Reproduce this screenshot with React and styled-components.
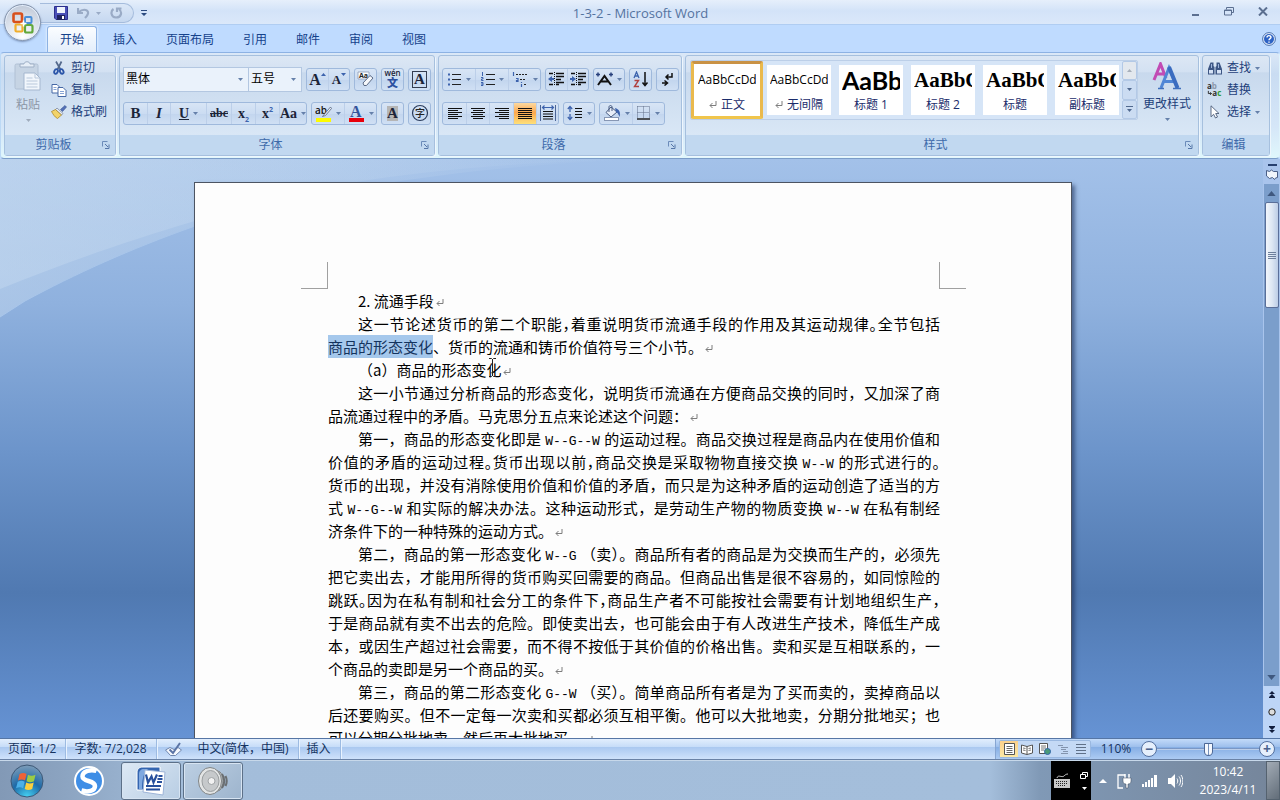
import React, { useState } from "react";
import styled, { createGlobalStyle, css } from "styled-components";

const GlobalStyle = createGlobalStyle`
  * {
    box-sizing: border-box;
  }
  body {
    margin: 0;
    font-family: "Open Sans", "Noto Sans CJK SC", sans-serif;
    font-size: 12px;
    line-height: 16px;
    color: #1e3f7a;
  }
  button, select, input {
    margin: 0;
    padding: 0;
    border: 0;
    background: none;
    color: inherit;
    font: inherit;
  }
  svg {
    display: block;
    flex: none;
  }
`;

const INK = "#2b3c5c";
const BLUE = "#3d63ad";

/* ---------- small drawings ---------- */

const Arrow = ({ up, color = "#6580aa", size = 5 }) => (
  <svg width={size} height={(size + 1) / 2} viewBox="0 0 5 3">
    <path d={up ? "M0 3h5L2.500 0z" : "M0 0h5L2.500 3z"} fill={color} />
  </svg>
);

const Lines = ({ rows, width = 16, height = 13, color = "#111" }) => (
  <svg width={width} height={height} viewBox={`0 0 ${width} ${height}`}>
    {rows.map(([x, y, w]) => (
      <rect key={y + "-" + x} x={x} y={y} width={w} height="1" fill={color} />
    ))}
  </svg>
);

const OfficeLogo = () => (
  <svg width="24" height="24" viewBox="0 0 24 24" fill="none" strokeWidth="2.600">
    <rect x="2.500" y="2.500" width="8.500" height="8.500" rx="1.500" stroke="#d8501c" />
    <rect x="14" y="6" width="6.500" height="6" rx="1" stroke="#4a8fd8" strokeWidth="2" />
    <rect x="4.500" y="13.500" width="7" height="7" rx="1" stroke="#f0ae2c" strokeWidth="2.200" />
    <rect x="14" y="14" width="7.500" height="7.500" rx="1.500" stroke="#62a83c" strokeWidth="2.200" />
    <path d="M12.500 9.500v6M9.500 12.500h6" stroke="#fff" strokeWidth="1.500" />
  </svg>
);

const SaveIcon = () => (
  <svg width="14" height="14" viewBox="0 0 14 14">
    <path d="M.5.500h13v13H2l-1.500-1.500z" fill="#4a50b8" stroke="#2c2f8c" />
    <rect x="3" y="1" width="8" height="6" fill="#eef3fc" />
    <rect x="3" y="9" width="8" height="5" fill="#1f2360" />
    <rect x="8" y="10" width="2" height="3" fill="#fff" />
  </svg>
);

const UndoIcon = () => (
  <svg width="13" height="12" viewBox="0 0 13 12" fill="none" stroke="#9aabc6" strokeWidth="2.200">
    <path d="M2 5c3-3 8-3 9 0 .6 2.500-1 4-3 6" />
    <path d="M1 1v5h5" />
  </svg>
);

const RedoIcon = () => (
  <svg width="13" height="12" viewBox="0 0 13 12" fill="none" stroke="#9aabc6" strokeWidth="2.200">
    <path d="M3.500 2C.5 4 .5 10 6 10.500c5.500 0 6.500-5.500 3-8.500" />
    <path d="M7 5V1.500h4.500" />
  </svg>
);

const HelpIcon = () => (
  <svg width="14" height="14" viewBox="0 0 14 14">
    <circle cx="7" cy="7" r="6.400" fill="#e9f1fb" stroke="#4b70ad" />
    <circle cx="7" cy="7" r="5" fill="#2d62c4" />
    <path d="M5 5.500c0-2.400 4-2.400 4-.2C9 6.700 7 6.600 7 8.200M7 9.400v1.300" fill="none" stroke="#fff" strokeWidth="1.400" />
  </svg>
);

const PasteIcon = () => (
  <svg width="28" height="30" viewBox="0 0 28 30">
    <rect x="1" y="3" width="23" height="25" rx="1.500" fill="#c6d4e4" stroke="#b0c0d4" />
    <path d="M6 6h14V3h-4c0-3-6-3-6 0H6z" fill="#e6eef7" stroke="#9fb0c6" />
    <path d="M10 12h11l5 5v12H10z" fill="#f1f6fc" stroke="#a5b7cf" />
    <path d="M21 12v5h5M12.500 17h6M12.500 20h11M12.500 23h11M12.500 26h11" fill="none" stroke="#b9c8db" />
  </svg>
);

const CutIcon = () => (
  <svg width="14" height="14" viewBox="0 0 14 14" fill="none">
    <path d="M4 .5l4.500 8M9.500.5L5.500 8.500" stroke="#54698c" strokeWidth="1.700" />
    <ellipse cx="4" cy="10.500" rx="1.700" ry="2.400" stroke="#2b55a8" strokeWidth="1.900" transform="rotate(25 4 10.500)" />
    <ellipse cx="9.700" cy="10.500" rx="1.700" ry="2.400" stroke="#2b55a8" strokeWidth="1.900" transform="rotate(-25 9.700 10.500)" />
  </svg>
);

const CopyIcon = () => (
  <svg width="15" height="13" viewBox="0 0 15 13" fill="#fff" stroke="#4668a5">
    <path d="M.5.500h5l2.500 2.500v6H.5z" />
    <path d="M6.500 3.500h5l3 3v6h-8z" />
    <path d="M2 3.500h3M2 5.500h3M8.500 7.500h4M8.500 9.500h4" stroke="#86a3d4" />
  </svg>
);

const BrushIcon = () => (
  <svg width="16" height="14" viewBox="0 0 16 14">
    <path d="M9.500 4.500L14 .5l1.500 1.500-4 4.500z" fill="#5470b8" stroke="#34508f" strokeWidth=".6" />
    <path d="M6 3l6 5.500-1.500 1.500L4.500 4.500z" fill="#e9edf5" stroke="#6d7a94" strokeWidth=".7" />
    <path d="M4.500 4.500l6 5.500-4 3.500C3.500 12 2 9 .5 6.500z" fill="#f2d36a" stroke="#a37f20" strokeWidth=".7" />
  </svg>
);

const EraserIcon = () => (
  <svg width="17" height="16" viewBox="0 0 17 16">
    <path d="M1 1h11v7H1z" fill="#fff" stroke="#8b9ab4" strokeWidth=".8" />
    <text x="2" y="7" fontSize="7" fontWeight="700" fill="#222">Aa</text>
    <path d="M6 12l7-7.500 3 2.500-6.500 7.500H7z" fill="#f6f8fb" stroke="#5c6b86" />
  </svg>
);

const HighlightIcon = () => (
  <svg width="17" height="17" viewBox="0 0 17 17">
    <text x="0" y="9" fontSize="10" fontWeight="600" fill="#111">ab</text>
    <path d="M15.500 2l-6 7-2 2.500 3-1 6-7z" fill="#e8edf5" stroke="#56657f" strokeWidth=".8" />
    <rect x="1" y="13" width="15" height="4" fill="#fdfb00" />
  </svg>
);

const FontColorIcon = () => (
  <svg width="17" height="17" viewBox="0 0 17 17">
    <text x="2" y="12" fontSize="16" fontWeight="700" fontFamily="Liberation Serif" fill="#34549a">A</text>
    <rect x="1" y="13" width="15" height="4" fill="#e8000b" />
  </svg>
);

const CircledIcon = () => (
  <svg width="18" height="18" viewBox="0 0 18 18">
    <circle cx="9" cy="9" r="7.500" fill="none" stroke={INK} strokeWidth="1.200" />
    <text x="4" y="13" fontSize="10" fontWeight="500" fill="#222">字</text>
  </svg>
);

const BulletsIcon = () => (
  <svg width="15" height="14" viewBox="0 0 15 14">
    <path d="M1 2.500h2M1 7.500h2M1 12.500h2" stroke={BLUE} strokeWidth="2" />
    <path d="M5 2.500h9M5 7.500h9M5 12.500h9" stroke="#222" />
  </svg>
);

const NumbersIcon = () => (
  <svg width="15" height="14" viewBox="0 0 15 14">
    <path d="M2.500 0v4M1 5.500h2v1.500H1.500v1.500h2M1 10.500h2v3H1M1 12h2" fill="none" stroke={BLUE} />
    <path d="M6 2.500h9M6 7.500h9M6 12.500h9" stroke="#222" />
  </svg>
);

const OutlineIcon = () => (
  <svg width="17" height="15" viewBox="0 0 17 15">
    <path d="M1.500 0v4M4 6.500h2v3H4.500V8.500H6M9.500 10v1M9.500 12v3" fill="none" stroke={BLUE} strokeWidth="1.200" />
    <path d="M4 2.500h2M7 2.500h2M10 2.500h2M13 2.500h2M8 7.500h2M11 7.500h2M12 12.500h2" stroke="#222" />
  </svg>
);

const IndentIcon = ({ out }) => (
  <svg width="17" height="14" viewBox="0 0 17 14">
    <path d="M1 1.500h4M8 1.500h8M8 4.500h8M8 7.500h5M8 10.500h8M1 12.500h4M8 12.500h3" stroke="#111" strokeWidth="1.400" />
    <path d="M6.500 0v14" stroke="#111" strokeDasharray="1 1" />
    <path d={out ? "M0 7l4-3v2h2v2H4v2z" : "M6 7L2 4v2H0v2h2v2z"} fill={BLUE} />
  </svg>
);

const WideTextIcon = () => (
  <svg width="17" height="14" viewBox="0 0 17 14" fill="none">
    <path d="M2 13l6.500-9L15 13M5 9.500h7" stroke="#111" strokeWidth="2" />
    <path d="M0 2.500h4M2 .5v4M17 2.500h-4M15 .5v4" stroke="#28407c" strokeWidth="1.500" />
  </svg>
);

const SortIcon = () => (
  <svg width="16" height="17" viewBox="0 0 16 17">
    <path d="M1 7l2.500-6L6 7M2 5h3" fill="none" stroke={BLUE} strokeWidth="1.300" />
    <path d="M1.500 9.500h4l-4 6h4.500" fill="none" stroke="#b04040" strokeWidth="1.400" />
    <path d="M12 1v13M9.500 11.500l2.500 3 2.500-3" fill="none" stroke="#111" strokeWidth="1.500" />
  </svg>
);

const MarksIcon = () => (
  <svg width="12" height="14" viewBox="0 0 12 14" fill="none" stroke="#111" strokeWidth="1.500">
    <path d="M10 1v4H4M6.500 2.500L4 5l2.500 2.500M0 11h5M2.500 8.500L5.500 11l-3 2.500" />
  </svg>
);

const DistributeIcon = () => (
  <svg width="16" height="16" viewBox="0 0 16 16" fill="none">
    <path d="M.5 0v16M15.500 0v16" stroke="#4c6596" />
    <path d="M2 2.500h12M4.500.5l-2 2 2 2M11.500.5l2 2-2 2" stroke={BLUE} strokeWidth="1.200" />
    <path d="M3 6.500h10M3 9h10M3 11.500h10M3 14h10" stroke="#111" strokeWidth="1.200" />
  </svg>
);

const SpacingIcon = () => (
  <svg width="16" height="16" viewBox="0 0 16 16" fill="none">
    <path d="M3 2v5M.8 4L3 1.500 5.200 4M3 9v5M.8 12L3 14.500 5.200 12" stroke={BLUE} strokeWidth="1.300" />
    <path d="M8 3.500h7M8 6.500h7M8 9.500h7M8 12.500h7" stroke="#111" strokeWidth="1.200" />
  </svg>
);

const BucketIcon = () => (
  <svg width="18" height="16" viewBox="0 0 18 16">
    <path d="M8 2l6 5-6 5-5-4.500z" fill="#e8eef8" stroke="#485b80" />
    <path d="M6 7V2c0-2 3-2 3 0v4" fill="none" stroke="#485b80" />
    <path d="M12 3c4 1 6 4 4.500 9-1-2.500-1.500-4-3.500-5z" fill={BLUE} />
    <rect x="1.500" y="12.500" width="14" height="3" fill="#fff" stroke="#8797b4" />
  </svg>
);

const BorderIcon = () => (
  <svg width="14" height="14" viewBox="0 0 14 14" fill="none">
    <path d="M.5.500h12v11M.5.500v12M6.500.500v12M.5 6.500h12" stroke="#5e6c88" strokeDasharray="1 1" />
    <path d="M0 13h13" stroke="#222" strokeWidth="1.500" />
  </svg>
);

const LauncherIcon = () => (
  <svg width="8" height="8" viewBox="0 0 8 8" fill="none">
    <path d="M.5 5.500v-5h5" stroke="#6c8cba" />
    <path d="M3 3l3 3M7 3.500v4H3" stroke="#5576a8" />
  </svg>
);

const ChangeStyleIcon = () => (
  <svg width="30" height="28" viewBox="0 0 30 28" fill="none">
    <path d="M2 18L8.500 2 14 16M4.500 12h8" stroke="#c14bb4" strokeWidth="3" />
    <path d="M9 26l8-20 8.500 20M11.500 19.500h12" stroke="#4f86d6" strokeWidth="3" />
    <path d="M17 5l8.500 21" stroke="#3a6cc0" strokeWidth="4" />
    <path d="M6 26.500h6M21 26.500h8" stroke="#3f6fbd" strokeWidth="1.500" />
  </svg>
);

const FindIcon = () => (
  <svg width="15" height="13" viewBox="0 0 15 13">
    <path d="M3 .5h3V4l1 1v7.500H.5V7zM12 .5H9V4L8 5v7.500h6.500V7z" fill="#3d5684" />
    <rect x="1.500" y="8" width="4" height="3.500" fill="#d5e2f5" />
    <rect x="9.500" y="8" width="4" height="3.500" fill="#d5e2f5" />
    <path d="M4 2v4M11 2v4" stroke="#9fb6dc" />
  </svg>
);

const ReplaceIcon = () => (
  <svg width="18" height="16" viewBox="0 0 18 16">
    <text x="0" y="7" fontSize="9" fontWeight="700" fill="#333">a<tspan fill="#8b97aa">b</tspan></text>
    <path d="M1.500 9v3h3.500M3.500 10.500L5 12l-1.500 1.500" fill="none" stroke="#222" />
    <text x="6" y="15" fontSize="9" fontWeight="700" fill="#333">a<tspan fill="#2e9c3b">c</tspan></text>
  </svg>
);

const SelectIcon = () => (
  <svg width="10" height="14" viewBox="0 0 10 14">
    <path d="M1 .8v11l2.600-2.500L5.500 13l2-1-1.800-3.500H9z" fill="#fff" stroke="#4b5b78" strokeWidth=".9" />
  </svg>
);

const ReturnMark = styled(({ className }) => (
  <svg className={className} width="8" height="8" viewBox="0 0 8 8" fill="none" stroke="#7d7d7d">
    <path d="M7 0v4.500H1M3.500 2L1 4.500 3.500 7" />
  </svg>
))`
  display: inline-block;
`;

const ProofIcon = () => (
  <svg width="17" height="15" viewBox="0 0 17 15">
    <path d="M.5 8L5 5.500l4 2 4-2 3.500 2.500-6 5.500h-5z" fill="#f5f8fd" stroke="#6f86ae" />
    <path d="M4.500 7.500L8 11l7-10" fill="none" stroke="#5b74a5" strokeWidth="2" />
  </svg>
);

const StartIcon = () => (
  <svg width="34" height="34" viewBox="0 0 34 34">
    <defs>
      <radialGradient id="orb" cx=".5" cy="1" r="1">
        <stop offset="0" stopColor="#46d4f4" />
        <stop offset=".5" stopColor="#1d6aa8" />
        <stop offset="1" stopColor="#7e9db9" />
      </radialGradient>
    </defs>
    <circle cx="17" cy="17" r="16" fill="url(#orb)" stroke="#3d5876" />
    <path d="M9.500 10c3-1.500 5-1.400 7 0l-1.500 6.500c-2.200-1.400-4.300-1.300-7 0z" fill="#ee6237" />
    <path d="M18 10.800c2.500 1.300 4.700 1.200 7.500 0L24 17.300c-2.800 1.200-5 1.200-7.500 0z" fill="#9bcb45" />
    <path d="M7.700 17.700c2.700-1.300 4.900-1.300 7 0l-1.600 6.500c-2.200-1.300-4.400-1.300-7 0z" fill="#4bb0e8" />
    <path d="M16.200 18.500c2.500 1.300 4.800 1.200 7.500 0L22.200 25c-2.800 1.200-5.100 1.200-7.500 0z" fill="#fccf3d" />
  </svg>
);

const SogouIcon = () => (
  <svg width="30" height="30" viewBox="0 0 30 30">
    <circle cx="15" cy="15" r="15" fill="#fff" />
    <circle cx="15" cy="15" r="13" fill="#3f8ee6" />
    <path d="M22.500 5C17 3 8.500 5 8.500 10.500 8.500 16 21 14 21 20c0 5-7 6.500-13.500 4.500" fill="none" stroke="#fff" strokeWidth="4.500" />
  </svg>
);

const WordIcon = () => (
  <svg width="32" height="32" viewBox="0 0 32 32">
    <path d="M2 25V8c0-4 2-6 6-6h17v23z" fill="#3465b0" stroke="#fff" />
    <path d="M4 24V9c0-3 2-5 5-5h4C8 8 7 16 7 24z" fill="#7fa8e0" />
    <path d="M10 5l20 2-2 23-20-3z" fill="#fff" stroke="#9db4d8" />
    <path d="M11 9.500l2 8 3.500-6 2 6L22 9.500" fill="none" stroke="#28509c" strokeWidth="2.200" />
    <path d="M23.500 11h4M22.500 14h5M22 17h5M11 21h15M11 24.500h14" stroke="#28509c" strokeWidth="1.800" />
  </svg>
);

const SpeakerIcon = () => (
  <svg width="32" height="32" viewBox="0 0 32 32">
    <path d="M14 3l9 4c4 3 4 14 0 18l-9 4z" fill="#b4b8ba" stroke="#808486" />
    <path d="M25 9c3 4 3 10 0 14M28.500 11c1.500 3 1.500 7 0 10" fill="none" stroke="#6a6e71" strokeWidth="2" />
    <ellipse cx="13" cy="16" rx="11.500" ry="13.500" fill="#e2e4e4" stroke="#808486" />
    <ellipse cx="13.500" cy="16" rx="8.500" ry="10.500" fill="#c6c9cb" stroke="#9a9ea0" />
    <circle cx="14.500" cy="16" r="3.500" fill="#f2f2f2" stroke="#a0a4a6" />
  </svg>
);

const KeyboardIcon = () => (
  <svg width="16" height="16" viewBox="0 0 16 16" fill="none" stroke="#c8c8c8">
    <path d="M3 5c1-4 5 0 7-2 1-1 2-2 4-2" />
    <rect x=".5" y="6.500" width="15" height="8" fill="#c8c8c8" />
    <path d="M2 8.500h12M2 10.500h12M4 12.500h8" stroke="#222" strokeDasharray="1 1" />
  </svg>
);

const PlugIcon = () => (
  <svg width="15" height="16" viewBox="0 0 15 16">
    <path d="M6 15H1V2h7" fill="none" stroke="#fff" strokeWidth="1.300" />
    <path d="M8 1v4M12 1v4" stroke="#fff" strokeWidth="1.500" />
    <path d="M6 5h8v3c0 2-1 3-3 3v4H9v-4c-2 0-3-1-3-3z" fill="#fff" stroke="#3c4a5c" strokeWidth=".5" />
  </svg>
);

const SignalIcon = () => (
  <svg width="16" height="12" viewBox="0 0 16 12" fill="#fff">
    <path d="M0 9h2v3H0zM3 7h2v5H3zM6 5h2v7H6zM9 3h2v9H9zM12 0h3v12h-3z" />
  </svg>
);

const VolumeIcon = () => (
  <svg width="15" height="14" viewBox="0 0 15 14">
    <path d="M0 4h3l4-4v14l-4-4H0z" fill="#fff" />
    <path d="M9 4.500c1 1.500 1 3.500 0 5M11 2.500c2 2.500 2 6.500 0 9M13 1c2.500 3.500 2.500 8.500 0 12" fill="none" stroke="#fff" />
  </svg>
);

/* ---------- window and title bar ---------- */

const Window = styled.div`
  position: relative;
  display: flex;
  flex-direction: column;
  height: 100vh;
  overflow: hidden;
  background: #bfdbff;
`;

const TitleBar = styled.header`
  display: flex;
  align-items: center;
  height: 25px;
  padding: 2px 12px 0 40px;
  border-bottom: 1px solid #b0cdf2;
  background: linear-gradient(#e6effb, #d3e3f8 45%, #dbe8fa);
`;

const QuickAccess = styled.div`
  display: flex;
  align-items: center;
  gap: 9px;
  width: 94px;
  height: 20px;
  padding-left: 14px;
  border: 1px solid #a5bcdc;
  border-left: 0;
  border-radius: 0 10px 10px 0;
  background: linear-gradient(#dbe7f7, #c6d8f0);
`;

const PlainButton = styled.button`
  display: flex;
  align-items: center;
  justify-content: center;
  gap: ${(p) => p.$gap || 0}px;
`;

const Title = styled.h1`
  flex: 1;
  margin: 0;
  padding-right: 64px;
  text-align: center;
  font-size: 13px;
  font-weight: 400;
  color: #54739f;
`;

const WindowButtons = styled.div`
  display: flex;
  gap: 24px;
  padding-bottom: 4px;
`;

const OfficeButton = styled.button`
  position: absolute;
  top: 4px;
  left: 4px;
  z-index: 2;
  display: flex;
  align-items: center;
  justify-content: center;
  width: 37px;
  height: 37px;
  border: 1px solid #8594ac;
  border-radius: 50%;
  background: radial-gradient(circle at 50% 90%, #fff, #dfe5ee 45%, #b7c1d2);
  box-shadow: 0 0 0 1px #e4eefb inset, 0 1px 2px rgba(60, 80, 120, 0.5);
`;

const TabBar = styled.nav`
  display: flex;
  align-items: flex-end;
  gap: 5px;
  height: 27px;
  padding: 0 4px 0 48px;
`;

const Tab = styled.button`
  height: 25px;
  padding: 0 12px;
  border: 1px solid transparent;
  border-bottom: 0;
  border-radius: 3px 3px 0 0;
  color: #15428b;
  box-sizing: content-box;
  margin: 0 -1px;
  ${(p) =>
    p.$active &&
    css`
      border-color: #8db2e3;
      background: linear-gradient(#fbfdff, #e3eefb);
      box-shadow: 0 0 3px #fff;
    `}
`;

const HelpButton = styled(PlainButton)`
  margin-left: auto;
  height: 26px;
`;

/* ---------- ribbon ---------- */

const Ribbon = styled.section`
  display: flex;
  gap: 3px;
  padding: 2px 9px 2px 3px;
  border: 1px solid #8db2e3;
  border-color: #8db2e3 #dff3fb #7c9cc8 #bcd9f5;
  border-radius: 4px;
  background: linear-gradient(#dbe8f7, #c9dcf2 20%, #d5e6f8 70%, #e0f7fc);
`;

const GroupBox = styled.section`
  display: flex;
  flex-direction: column;
  flex: ${(p) => (p.$grow ? "1 1 0" : "none")};
  min-width: 0;
  width: ${(p) => (p.$width ? p.$width + "px" : "auto")};
  height: 101px;
  border: 1px solid #a6c0de;
  border-radius: 3px;
  background: linear-gradient(#dce7f4, #d3e1f2 16%, #c8d9ed 17%, #d9e7f6 80%);
  box-shadow: 1px 1px 0 #eef6fd;
`;

const GroupBody = styled.div`
  display: flex;
  flex: 1;
  padding: ${(p) => p.$pad || "0"};
`;

const GroupLabel = styled.footer`
  display: flex;
  align-items: center;
  height: 20px;
  padding-right: 5px;
  background: #c1d8f0;
  color: #3e6aaa;
  text-align: center;
  span {
    flex: 1;
  }
`;

const Group = ({ label, launcher, width, grow, pad, children }) => (
  <GroupBox $width={width} $grow={grow} aria-label={label}>
    <GroupBody $pad={pad}>{children}</GroupBody>
    <GroupLabel>
      <span>{label}</span>
      {launcher && (
        <PlainButton aria-label={label + "选项"}>
          <LauncherIcon />
        </PlainButton>
      )}
    </GroupLabel>
  </GroupBox>
);

const PasteButton = styled.button`
  display: flex;
  flex-direction: column;
  align-items: center;
  gap: 6px;
  width: 46px;
  padding-top: 5px;
  color: #8c96a6;
`;

const StackList = styled.div`
  display: flex;
  flex-direction: column;
  gap: 2px;
  padding-top: 2px;
`;

const StackButton = styled.button`
  display: flex;
  align-items: center;
  gap: 4px;
  height: 20px;
  > svg:first-child {
    width: 16px;
  }
`;

const ToolRows = styled.div`
  display: flex;
  flex-direction: column;
  gap: 10px;
`;

const ToolRow = styled.div`
  display: flex;
  align-items: center;
  gap: 4px;
  height: 24px;
`;

const ButtonGroup = styled.div`
  display: flex;
  height: 23px;
  border: 1px solid #9fb9dc;
  border-radius: 3px;
  background: linear-gradient(#d8e5f5, #cbdcf2 50%, #c2d5ee 51%, #d0e0f4);
`;

const Tool = styled.button`
  display: flex;
  align-items: center;
  justify-content: center;
  gap: 4px;
  width: ${(p) => p.$w || 21}px;
  color: #1c2438;
  background: ${(p) =>
    p.$active ? "linear-gradient(#fcd9a0, #fba84f 45%, #fee07a)" : "none"};
  & + & {
    border-left: 1px solid #bccfe9;
  }
`;

const Glyph = styled.span`
  display: block;
  font-family: "Liberation Serif", serif;
  font-size: ${(p) => p.$size || 14}px;
  font-weight: 700;
  font-style: ${(p) => (p.$italic ? "italic" : "normal")};
  text-decoration: ${(p) => p.$line || "none"};
  padding: ${(p) => (p.$boxed ? "0 1px" : "0")};
  line-height: 15px;
  border: ${(p) => (p.$boxed ? "1px solid #333c50" : "0")};
  background: ${(p) => (p.$shade ? "#b5b5b5" : "none")};
  sub, sup {
    font-family: "Open Sans", sans-serif;
    font-size: 7px;
    line-height: 0;
    color: #3d63ad;
  }
`;

const SizeGlyph = styled(Glyph)`
  display: flex;
  svg {
    margin-top: 1px;
  }
`;

const Phonetic = styled.span`
  display: flex;
  flex-direction: column;
  align-items: center;
  font-size: 8px;
  font-weight: 600;
  line-height: 8px;
  b {
    font-size: 11px;
    line-height: 12px;
    color: #2c50a0;
  }
`;

const Combos = styled.div`
  display: flex;
`;

const Combo = styled.label`
  display: flex;
  align-items: center;
  width: ${(p) => p.$width}px;
  height: 25px;
  padding: 0 5px 0 2px;
  border: 1px solid #b3c7e1;
  background: #eaf2fb;
  & + & {
    margin-left: -1px;
  }
  select {
    flex: 1;
    min-width: 0;
    height: 22px;
    appearance: none;
    color: #000;
    outline: 0;
  }
`;

const Gallery = styled.div`
  display: flex;
  flex: 1;
  min-width: 0;
  height: 60px;
  border: 1px solid #bccfe8;
  border-radius: 2px;
  background: #d6e5f7;
`;

const GalleryItems = styled.div`
  display: flex;
  flex: 1;
  min-width: 0;
  overflow: hidden;
`;

const StyleCard = styled.button`
  display: flex;
  flex-direction: column;
  flex: none;
  width: 72px;
  height: 58px;
  padding: 1px;
  border: 3px solid transparent;
  color: #1b2c6b;
  background: #fff content-box;
  ${(p) =>
    p.$active &&
    css`
      border-color: #c99245 #eab94d #f0c54c;
      border-radius: 2px;
      background: #fff;
    `}
`;

const Preview = styled.span`
  display: block;
  align-self: stretch;
  height: 32px;
  margin: 0 3px;
  overflow: hidden;
  white-space: nowrap;
  text-align: left;
  line-height: 30px;
  color: #000;
  ${(p) => p.$kind === "body" && "font-size: 12px;"}
  ${(p) =>
    p.$kind === "sans" &&
    'font-family: Lato, sans-serif; font-size: 25px; font-weight: 700;'}
  ${(p) =>
    p.$kind === "serif" &&
    'font-family: "Liberation Serif", serif; font-size: 21px; font-weight: 700;'}
`;

const CardName = styled.span`
  display: flex;
  align-items: center;
  align-self: center;
  gap: 4px;
`;

const GalleryScroll = styled.div`
  display: flex;
  flex-direction: column;
  width: 15px;
  button {
    display: flex;
    flex: 1;
    flex-direction: column;
    align-items: center;
    justify-content: center;
    gap: 2px;
    border: 1px solid #b3c9e6;
    border-radius: 2px;
    background: #cbdcf2;
  }
  button:first-child {
    background: #e3e8ee;
  }
`;

const ChangeStyle = styled.button`
  display: flex;
  flex-direction: column;
  align-items: center;
  gap: 6px;
  width: 58px;
  padding-top: 2px;
`;

/* ---------- workspace ---------- */

const Workspace = styled.main`
  position: relative;
  display: flex;
  flex: 1;
  min-height: 0;
  overflow: hidden;
  background: linear-gradient(#a3c1e9, #8fb1de 25%, #6d95cb 50%, #5079b1 75%, #6693d4);
`;

const Swoosh = styled.svg`
  position: absolute;
  top: 0;
  left: 0;
`;

const Canvas = styled.div`
  position: relative;
  display: flex;
  flex: 1;
  justify-content: center;
  align-items: flex-start;
  padding: 23px 0 0 3px;
  overflow: hidden;
`;

const Page = styled.article`
  position: relative;
  width: 878px;
  min-height: 1240px;
  padding: 79px 105px 79px 106px;
  border: 1px solid #4c5462;
  background: #fdfdfd;
  box-shadow: 3px 3px 4px rgba(30, 50, 90, 0.6);
`;

const CropMarks = styled.div`
  display: flex;
  justify-content: space-between;
`;

const CropMark = styled.i`
  width: 27px;
  height: 27px;
  border-bottom: 1px solid #a0a0a0;
  ${(p) => (p.$side === "left" ? "border-right" : "border-left")}: 1px solid #a0a0a0;
`;

const TextColumn = styled.div`
  padding: 0 26px 0 27px;
  font-family: "Noto Sans CJK SC", sans-serif;
  font-size: 15px;
  line-height: 23px;
  color: #000;
`;

const Paragraph = styled.p`
  margin: 0;
  text-indent: 2em;
`;

const Line = styled.span`
  display: block;
  height: 23px;
  white-space: nowrap;
  text-align-last: ${(p) => (p.$full ? "justify" : "left")};
  font-feature-settings: ${(p) => (p.$tight ? '"halt"' : "normal")};
  & + & {
    text-indent: 0;
  }
  svg {
    margin-left: 2px;
  }
`;

const Latin = styled.span`
  margin: 0 4px;
  font-family: "Liberation Mono", monospace;
  font-size: 13px;
  line-height: 15px;
`;

const Selected = styled.mark`
  display: inline-block;
  color: #14345e;
  background: #a5c8ec;
`;

const TextCursor = styled.svg`
  position: absolute;
  top: 175px;
  left: 293px;
`;

const ScrollColumn = styled.aside`
  position: relative;
  display: flex;
  flex-direction: column;
  align-items: center;
  width: 17px;
  padding-top: 5px;
  background: #a9c4ec;
`;

const Track = styled.div`
  display: flex;
  flex: 1;
  flex-direction: column;
  align-items: center;
  width: 15px;
  margin-top: 4px;
  background: #7b9ecb;
`;

const ScrollArrow = styled.button`
  display: flex;
  align-items: center;
  justify-content: center;
  width: 15px;
  height: 18px;
`;

const Thumb = styled.div`
  display: flex;
  align-items: center;
  justify-content: center;
  width: 14px;
  height: 106px;
  border: 1px solid #5a6f99;
  border-radius: 2px;
  background: linear-gradient(90deg, #f2f6fc, #dde7f3 50%, #bccde6);
`;

const Spacer = styled.div`
  flex: 1;
`;

const BrowseButtons = styled.div`
  display: flex;
  flex-direction: column;
  align-items: center;
  justify-content: space-around;
  height: 52px;
  background: #bdd5f7;
  width: 17px;
`;

/* ---------- status bar ---------- */

const StatusBar = styled.footer`
  display: flex;
  height: 22px;
  border-top: 1px solid #5676a5;
  border-bottom: 1px solid #6a82a6;
  color: #15335f;
  background: linear-gradient(#e2eefd, #c6dcf8 40%, #aac8f0 41%, #cfe2fb);
`;

const StatusItem = styled.div`
  display: flex;
  align-items: center;
  gap: 16px;
  padding: 0 9px 0 8px;
  border-right: 1px solid #9dbbe2;
  box-shadow: 1px 0 0 #e9f3ff;
  white-space: nowrap;
`;

const StatusRight = styled.div`
  display: flex;
  align-items: center;
  margin-left: auto;
  padding: 0 5px 0 3px;
  border-left: 1px solid #86a5d2;
  background: linear-gradient(#c3dbf9, #9dbfec 40%, #86aee4 41%, #accbf3);
`;

const Views = styled.div`
  display: flex;
  height: 18px;
  border: 1px solid #9ab8e0;
  border-radius: 2px;
  background: #c4d9f5;
`;

const ViewButton = styled.button`
  display: flex;
  align-items: center;
  justify-content: center;
  width: 18px;
  background: ${(p) => (p.$active ? "linear-gradient(#fbd08b, #fde9a5)" : "none")};
`;

const Percent = styled.span`
  width: 50px;
  text-align: center;
`;

const RoundButton = styled.button`
  width: 16px;
  height: 16px;
  border: 1px solid #54709f;
  border-radius: 50%;
  background: #e5effc;
  font-weight: 700;
  font-size: 14px;
  line-height: 12px;
  color: #49628d;
`;

const ZoomSlider = styled.input`
  width: 102px;
  height: 16px;
  appearance: none;
  background: linear-gradient(#5a7cb3, #dceafc) center / 100% 2px no-repeat;
  &::-webkit-slider-thumb {
    appearance: none;
    width: 9px;
    height: 13px;
    border: 1px solid #4c6796;
    border-radius: 1px 1px 5px 5px;
    background: linear-gradient(90deg, #f4f8fe 3px, #7690ba 3px, #7690ba 4px, #f4f8fe 4px);
  }
`;

/* ---------- taskbar ---------- */

const Taskbar = styled.footer`
  display: flex;
  align-items: center;
  height: 40px;
  border-top: 1px solid #c7d8ea;
  background: linear-gradient(90deg, #8299b6, #8ba3c0 60px, #a3bdda 180px, #a4bedb 990px, #8099b6 1040px, #75859a);
`;

const StartButton = styled.button`
  padding: 0 20px 0 10px;
`;

const PinnedButton = styled.button`
  padding: 0 17px 0 10px;
`;

const TaskButton = styled.button`
  display: flex;
  align-items: center;
  justify-content: center;
  width: 60px;
  height: 38px;
  margin-right: 2px;
  border: 1px solid #5c7088;
  border-radius: 3px;
  box-shadow: 0 0 0 1px #d7e4f2 inset;
  background: ${(p) =>
    p.$active ? "linear-gradient(135deg, #dde9f5, #b8cde3)" : "linear-gradient(135deg, #bccfe3, #9db4cd)"};
`;

const InputBox = styled.div`
  display: flex;
  align-items: center;
  justify-content: space-between;
  width: 40px;
  height: 39px;
  margin-left: auto;
  padding: 0 3px;
  background: #000;
`;

const InputSide = styled.div`
  display: flex;
  flex-direction: column;
  align-items: center;
  gap: 8px;
`;

const Tray = styled.div`
  display: flex;
  align-items: center;
  gap: 10px;
  padding: 0 15px 0 8px;
`;

const Clock = styled.time`
  width: 60px;
  color: #fff;
  text-align: center;
  line-height: 18px;
`;

const ShowDesktop = styled.button`
  width: 14px;
  height: 39px;
  margin-left: 8px;
  border: 1px solid #55626f;
  background: linear-gradient(135deg, #a2abb5, #626d79);
`;

/* ---------- data ---------- */

const tabs = ["开始", "插入", "页面布局", "引用", "邮件", "审阅", "视图"];

const styleCards = [
  { name: "正文", kind: "body", text: "AaBbCcDd", mark: true },
  { name: "无间隔", kind: "body", text: "AaBbCcDd", mark: true },
  { name: "标题 1", kind: "sans", text: "AaBb" },
  { name: "标题 2", kind: "serif", text: "AaBbC" },
  { name: "标题", kind: "serif", text: "AaBbC" },
  { name: "副标题", kind: "serif", text: "AaBbC" },
];

// a leading "~" marks a line whose punctuation is set half-width
const paragraphs = [
  ["2. 流通手段"],
  [
    "~这一节论述货币的第二个职能，着重说明货币流通手段的作用及其运动规律。全节包括",
    "[商品的形态变化]、货币的流通和铸币价值符号三个小节。",
  ],
  ["（a）商品的形态变化"],
  [
    "这一小节通过分析商品的形态变化，说明货币流通在方便商品交换的同时，又加深了商",
    "品流通过程中的矛盾。马克思分五点来论述这个问题：",
  ],
  [
    "第一，商品的形态变化即是W--G--W的运动过程。商品交换过程是商品内在使用价值和",
    "~价值的矛盾的运动过程。货币出现以前，商品交换是采取物物直接交换W--W的形式进行的。",
    "货币的出现，并没有消除使用价值和价值的矛盾，而只是为这种矛盾的运动创造了适当的方",
    "式W--G--W和实际的解决办法。这种运动形式，是劳动生产物的物质变换W--W在私有制经",
    "济条件下的一种特殊的运动方式。",
  ],
  [
    "第二，商品的第一形态变化W--G（卖）。商品所有者的商品是为交换而生产的，必须先",
    "把它卖出去，才能用所得的货币购买回需要的商品。但商品出售是很不容易的，如同惊险的",
    "~跳跃。因为在私有制和社会分工的条件下，商品生产者不可能按社会需要有计划地组织生产，",
    "于是商品就有卖不出去的危险。即使卖出去，也可能会由于有人改进生产技术，降低生产成",
    "本，或因生产超过社会需要，而不得不按低于其价值的价格出售。卖和买是互相联系的，一",
    "个商品的卖即是另一个商品的买。",
  ],
  [
    "第三，商品的第二形态变化G--W（买）。简单商品所有者是为了买而卖的，卖掉商品以",
    "后还要购买。但不一定每一次卖和买都必须互相平衡。他可以大批地卖，分期分批地买；也",
    "可以分期分批地卖，然后再大批地买。",
  ],
];

const renderText = (text) =>
  text.split(/([WG]--[WG](?:--[WG])?|\[.*?\])/).map((part, i) => {
    if (part.startsWith("[")) return <Selected key={i}>{part.slice(1, -1)}</Selected>;
    if (i % 2) return <Latin key={i}>{part}</Latin>;
    return part;
  });

/* ---------- sections ---------- */

const FontGroup = () => (
  <Group label="字体" launcher width={316} pad="11px 3px 0">
    <ToolRows>
      <ToolRow>
        <Combos>
          <Combo $width={126}>
            <select aria-label="字体" defaultValue="黑体">
              <option>黑体</option>
              <option>宋体</option>
            </select>
            <Arrow />
          </Combo>
          <Combo $width={54}>
            <select aria-label="字号" defaultValue="五号">
              <option>五号</option>
              <option>四号</option>
            </select>
            <Arrow />
          </Combo>
        </Combos>
        <ButtonGroup>
          <Tool aria-label="增大字体"><SizeGlyph $size={16}>A<Arrow up color={BLUE} /></SizeGlyph></Tool>
          <Tool aria-label="缩小字体"><SizeGlyph $size={13}>A<Arrow color={BLUE} /></SizeGlyph></Tool>
        </ButtonGroup>
        <ButtonGroup><Tool aria-label="清除格式"><EraserIcon /></Tool></ButtonGroup>
        <ButtonGroup><Tool aria-label="拼音指南"><Phonetic>wén<b>文</b></Phonetic></Tool></ButtonGroup>
        <ButtonGroup><Tool aria-label="字符边框"><Glyph $boxed $size={15}>A</Glyph></Tool></ButtonGroup>
      </ToolRow>
      <ToolRow>
        <ButtonGroup>
          <Tool aria-label="加粗" $w={23}><Glyph $size={15}>B</Glyph></Tool>
          <Tool aria-label="倾斜" $w={23}><Glyph $size={15} $italic>I</Glyph></Tool>
          <Tool aria-label="下划线" $w={36}><Glyph $line="underline">U</Glyph><Arrow /></Tool>
          <Tool aria-label="删除线" $w={25}><Glyph $size={12} $line="line-through">abc</Glyph></Tool>
          <Tool aria-label="下标" $w={24}><Glyph>x<sub>2</sub></Glyph></Tool>
          <Tool aria-label="上标" $w={24}><Glyph>x<sup>2</sup></Glyph></Tool>
          <Tool aria-label="更改大小写" $w={27}><Glyph>Aa</Glyph><Arrow /></Tool>
        </ButtonGroup>
        <ButtonGroup>
          <Tool aria-label="突出显示" $w={32}><HighlightIcon /><Arrow /></Tool>
          <Tool aria-label="字体颜色" $w={32}><FontColorIcon /><Arrow /></Tool>
        </ButtonGroup>
        <ButtonGroup><Tool aria-label="字符底纹"><Glyph $shade $size={15}>A</Glyph></Tool></ButtonGroup>
        <ButtonGroup><Tool aria-label="带圈字符"><CircledIcon /></Tool></ButtonGroup>
      </ToolRow>
    </ToolRows>
  </Group>
);

const alignRows = (short) =>
  [1, 3, 5, 7, 9, 11].map((y, i) => {
    const w = i % 2 ? 10 : 14;
    if (short === "left") return [1, y, w];
    if (short === "center") return [1 + (14 - w) / 2, y, w];
    if (short === "right") return [15 - w, y, w];
    return [1, y, 14];
  });

const ParagraphGroup = () => (
  <Group label="段落" launcher width={244} pad="11px 3px 0">
    <ToolRows>
      <ToolRow>
        <ButtonGroup>
          <Tool aria-label="项目符号" $w={32}><BulletsIcon /><Arrow /></Tool>
          <Tool aria-label="编号" $w={33}><NumbersIcon /><Arrow /></Tool>
          <Tool aria-label="多级列表" $w={32}><OutlineIcon /><Arrow /></Tool>
        </ButtonGroup>
        <ButtonGroup>
          <Tool aria-label="减少缩进量"><IndentIcon out /></Tool>
          <Tool aria-label="增加缩进量"><IndentIcon /></Tool>
        </ButtonGroup>
        <ButtonGroup><Tool aria-label="中文版式" $w={30}><WideTextIcon /><Arrow /></Tool></ButtonGroup>
        <ButtonGroup><Tool aria-label="排序"><SortIcon /></Tool></ButtonGroup>
        <ButtonGroup><Tool aria-label="显示编辑标记"><MarksIcon /></Tool></ButtonGroup>
      </ToolRow>
      <ToolRow>
        <ButtonGroup>
          <Tool aria-label="左对齐" $w={23}><Lines rows={alignRows("left")} /></Tool>
          <Tool aria-label="居中" $w={23}><Lines rows={alignRows("center")} /></Tool>
          <Tool aria-label="右对齐" $w={24}><Lines rows={alignRows("right")} /></Tool>
          <Tool aria-label="两端对齐" $w={23} $active><Lines rows={alignRows()} /></Tool>
          <Tool aria-label="分散对齐" $w={22}><DistributeIcon /></Tool>
        </ButtonGroup>
        <ButtonGroup><Tool aria-label="行距" $w={30}><SpacingIcon /><Arrow /></Tool></ButtonGroup>
        <ButtonGroup>
          <Tool aria-label="底纹" $w={32}><BucketIcon /><Arrow /></Tool>
          <Tool aria-label="边框" $w={32}><BorderIcon /><Arrow /></Tool>
        </ButtonGroup>
      </ToolRow>
    </ToolRows>
  </Group>
);

const StylesGroup = () => (
  <Group label="样式" launcher grow pad="4px 2px 0 4px">
    <Gallery>
      <GalleryItems>
        {styleCards.map((card, i) => (
          <StyleCard key={card.name} $active={i === 0}>
            <Preview $kind={card.kind}>{card.text}</Preview>
            <CardName>
              {card.mark && <ReturnMark />}
              {card.name}
            </CardName>
          </StyleCard>
        ))}
      </GalleryItems>
      <GalleryScroll>
        <button aria-label="上一行"><Arrow up color="#a7afba" /></button>
        <button aria-label="下一行"><Arrow color="#50698f" /></button>
        <button aria-label="其他"><Lines rows={[[0, 0, 7]]} width={7} height={1} color="#50698f" /><Arrow color="#50698f" /></button>
      </GalleryScroll>
    </Gallery>
    <ChangeStyle>
      <ChangeStyleIcon />
      <span>更改样式</span>
      <Arrow />
    </ChangeStyle>
  </Group>
);

const Document = () => (
  <Page>
    <CropMarks>
      <CropMark $side="left" />
      <CropMark $side="right" />
    </CropMarks>
    <TextColumn>
      {paragraphs.map((lines, p) => (
        <Paragraph key={p}>
          {lines.map((line, i) => {
            const last = i === lines.length - 1;
            return (
              <Line key={i} $full={!last} $tight={line.startsWith("~")}>
                {renderText(line.replace("~", ""))}
                {last && <ReturnMark />}
              </Line>
            );
          })}
        </Paragraph>
      ))}
    </TextColumn>
    <TextCursor width="9" height="19" viewBox="0 0 9 19" fill="none" stroke="#222">
      <path d="M1 .5h2.500l1 1 1-1H8M4.500 1v17M1 18.500h2.500l1-1 1 1H8" />
    </TextCursor>
  </Page>
);

export default function App() {
  const [tab, setTab] = useState(0);
  const [zoom, setZoom] = useState(110);

  return (
    <Window>
      <GlobalStyle />
      <OfficeButton aria-label="Office"><OfficeLogo /></OfficeButton>
      <TitleBar>
        <QuickAccess>
          <PlainButton aria-label="保存"><SaveIcon /></PlainButton>
          <PlainButton aria-label="撤消" $gap={6}><UndoIcon /><Arrow color="#9aabc6" /></PlainButton>
          <PlainButton aria-label="重复"><RedoIcon /></PlainButton>
        </QuickAccess>
        <PlainButton aria-label="自定义快速访问工具栏">
          <svg width="20" height="8" viewBox="0 0 20 8">
            <path d="M7 1h6v1H7zM7 4h6l-3 3z" fill="#2b4a80" />
          </svg>
        </PlainButton>
        <Title>1-3-2 - Microsoft Word</Title>
        <WindowButtons>
          <PlainButton aria-label="最小化">
            <svg width="9" height="9" viewBox="0 0 9 9"><path d="M1 7h7v2H1z" fill="#5b6f90" /></svg>
          </PlainButton>
          <PlainButton aria-label="还原">
            <svg width="10" height="9" viewBox="0 0 10 9" fill="none" stroke="#5b6f90">
              <path d="M2.500 2.500v-2h7v5h-2M.5 3h7v5h-7zM.5 3.500h7" />
            </svg>
          </PlainButton>
          <PlainButton aria-label="关闭">
            <svg width="10" height="9" viewBox="0 0 10 9"><path d="M1 .5l8 8M9 .5l-8 8" stroke="#5b6f90" strokeWidth="2" /></svg>
          </PlainButton>
        </WindowButtons>
      </TitleBar>

      <TabBar>
        {tabs.map((name, i) => (
          <Tab key={name} $active={i === tab} onClick={() => setTab(i)}>{name}</Tab>
        ))}
        <HelpButton aria-label="帮助"><HelpIcon /></HelpButton>
      </TabBar>

      <Ribbon>
        <Group label="剪贴板" launcher width={112} pad="0">
          <PasteButton>
            <PasteIcon />
            <span>粘贴</span>
            <Arrow color="#a0acbd" />
          </PasteButton>
          <StackList>
            <StackButton><CutIcon />剪切</StackButton>
            <StackButton><CopyIcon />复制</StackButton>
            <StackButton><BrushIcon />格式刷</StackButton>
          </StackList>
        </Group>
        <FontGroup />
        <ParagraphGroup />
        <StylesGroup />
        <Group label="编辑" width={68} pad="0 4px">
          <StackList>
            <StackButton><FindIcon />查找<Arrow /></StackButton>
            <StackButton><ReplaceIcon />替换</StackButton>
            <StackButton><SelectIcon />选择<Arrow /></StackButton>
          </StackList>
        </Group>
      </Ribbon>

      <Workspace>
        <Swoosh width="640" height="180" viewBox="0 0 640 180" fill="none">
          <defs>
            <linearGradient id="glow" x1="0" x2="1">
              <stop offset="0" stopColor="#c3d8ef" stopOpacity=".5" />
              <stop offset=".5" stopColor="#c3d8ef" stopOpacity=".3" />
              <stop offset="1" stopColor="#c3d8ef" stopOpacity="0" />
            </linearGradient>
          </defs>
          <path d="M0 0h640C460 5 320 20 195 62 120 84 60 106 0 130z" fill="url(#glow)" />
          <path d="M0 0h640C460 8 320 30 195 67 130 90 75 115 25 142L0 158z" fill="url(#glow)" />
          <path d="M195 67C130 90 75 115 25 142L0 158" stroke="#a9c6ea" />
        </Swoosh>
        <Canvas>
          <Document />
        </Canvas>
        <ScrollColumn>
          <svg width="14" height="16" viewBox="0 0 14 16">
            <path d="M3 0h9v2H3z" fill="#27406f" />
            <path d="M1.500 6.500l3 1 2-1.500 2 1.500h4v6l-2 .5-1 1.500-2-2-3 1-3-2.500z" fill="#f0f5fc" stroke="#4a5f87" />
          </svg>
          <Track>
            <ScrollArrow aria-label="向上滚动"><Arrow up size={9} color="#3f587f" /></ScrollArrow>
            <Thumb><Lines rows={[[0, 0, 8], [0, 2, 8], [0, 4, 8], [0, 6, 8]]} width={8} height={7} color="#6d7f9c" /></Thumb>
            <Spacer />
            <ScrollArrow aria-label="向下滚动"><Arrow size={9} color="#3f587f" /></ScrollArrow>
          </Track>
          <BrowseButtons>
            <PlainButton aria-label="上一页">
              <svg width="6" height="7" viewBox="0 0 6 7"><path d="M0 3l3-3 3 3zM0 6l3-3 3 3zM0 6h6v1H0z" fill="#111d3d" /></svg>
            </PlainButton>
            <PlainButton aria-label="选择浏览对象">
              <svg width="8" height="8" viewBox="0 0 8 8"><circle cx="4" cy="4" r="3.200" fill="#dcdcdc" stroke="#222" /></svg>
            </PlainButton>
            <PlainButton aria-label="下一页">
              <svg width="6" height="7" viewBox="0 0 6 7"><path d="M0 4l3 3 3-3zM0 1l3 3 3-3zM0 0h6v1H0z" fill="#111d3d" /></svg>
            </PlainButton>
          </BrowseButtons>
        </ScrollColumn>
      </Workspace>

      <StatusBar>
        <StatusItem>页面: 1/2</StatusItem>
        <StatusItem>字数: 7/2,028</StatusItem>
        <StatusItem><ProofIcon />中文(简体，中国)</StatusItem>
        <StatusItem>插入</StatusItem>
        <StatusRight>
          <Views>
            <ViewButton aria-label="页面视图" $active>
              <svg width="11" height="12" viewBox="0 0 11 12"><path d="M.5.500h10v11H.5z" fill="#fff" stroke="#555" /><path d="M2.500 3.500h6M2.500 5.500h6M2.500 7.500h6M2.500 9.500h6" stroke="#666" /></svg>
            </ViewButton>
            <ViewButton aria-label="阅读版式">
              <svg width="12" height="11" viewBox="0 0 12 11"><path d="M.5 1l5.500 1.500L11.500 1v8L6 10.500.5 9zM6 2.500v8" fill="#fff" stroke="#555" /><path d="M2 4l2.500.5M2 6l2.500.5M7.500 4.500L10 4M7.500 6.500L10 6" stroke="#777" /></svg>
            </ViewButton>
            <ViewButton aria-label="Web 版式">
              <svg width="12" height="12" viewBox="0 0 12 12"><path d="M.5.500h8v10h-8z" fill="#fff" stroke="#555" /><path d="M2 3h5M2 5h5M2 7h3" stroke="#777" /><circle cx="8.500" cy="8.500" r="3" fill="#4a9a78" stroke="#2f65a8" /></svg>
            </ViewButton>
            <ViewButton aria-label="大纲视图"><Lines rows={[[0, 1, 5], [3, 3, 7], [3, 5, 5], [5, 7, 5], [3, 9, 7]]} width={11} height={11} color="#8394ae" /></ViewButton>
            <ViewButton aria-label="普通视图"><Lines rows={[[0, 0, 10], [0, 3, 10], [0, 6, 10], [0, 9, 10]]} width={10} height={10} color="#5f7088" /></ViewButton>
          </Views>
          <Percent>{zoom}%</Percent>
          <RoundButton aria-label="缩小" onClick={() => setZoom(zoom - 10)}>−</RoundButton>
          <ZoomSlider type="range" min="10" max="210" aria-label="显示比例" value={zoom} onChange={(e) => setZoom(Number(e.target.value))} />
          <RoundButton aria-label="放大" onClick={() => setZoom(zoom + 10)}>+</RoundButton>
        </StatusRight>
      </StatusBar>

      <Taskbar>
        <StartButton aria-label="开始菜单"><StartIcon /></StartButton>
        <PinnedButton aria-label="浏览器"><SogouIcon /></PinnedButton>
        <TaskButton aria-label="Word" $active><WordIcon /></TaskButton>
        <TaskButton aria-label="音量"><SpeakerIcon /></TaskButton>
        <InputBox>
          <KeyboardIcon />
          <InputSide>
            <svg width="8" height="7" viewBox="0 0 8 7" fill="none" stroke="#fff"><path d="M2.500 2V.500h5v4H6M.5 2.500h5v4h-5z" /></svg>
            <Arrow color="#fff" />
          </InputSide>
        </InputBox>
        <Tray>
          <svg width="8" height="4" viewBox="0 0 8 4"><path d="M0 4h8L4 0z" fill="#fff" /></svg>
          <PlugIcon />
          <SignalIcon />
          <VolumeIcon />
        </Tray>
        <Clock>10:42<br />2023/4/11</Clock>
        <ShowDesktop aria-label="显示桌面" />
      </Taskbar>
    </Window>
  );
}
